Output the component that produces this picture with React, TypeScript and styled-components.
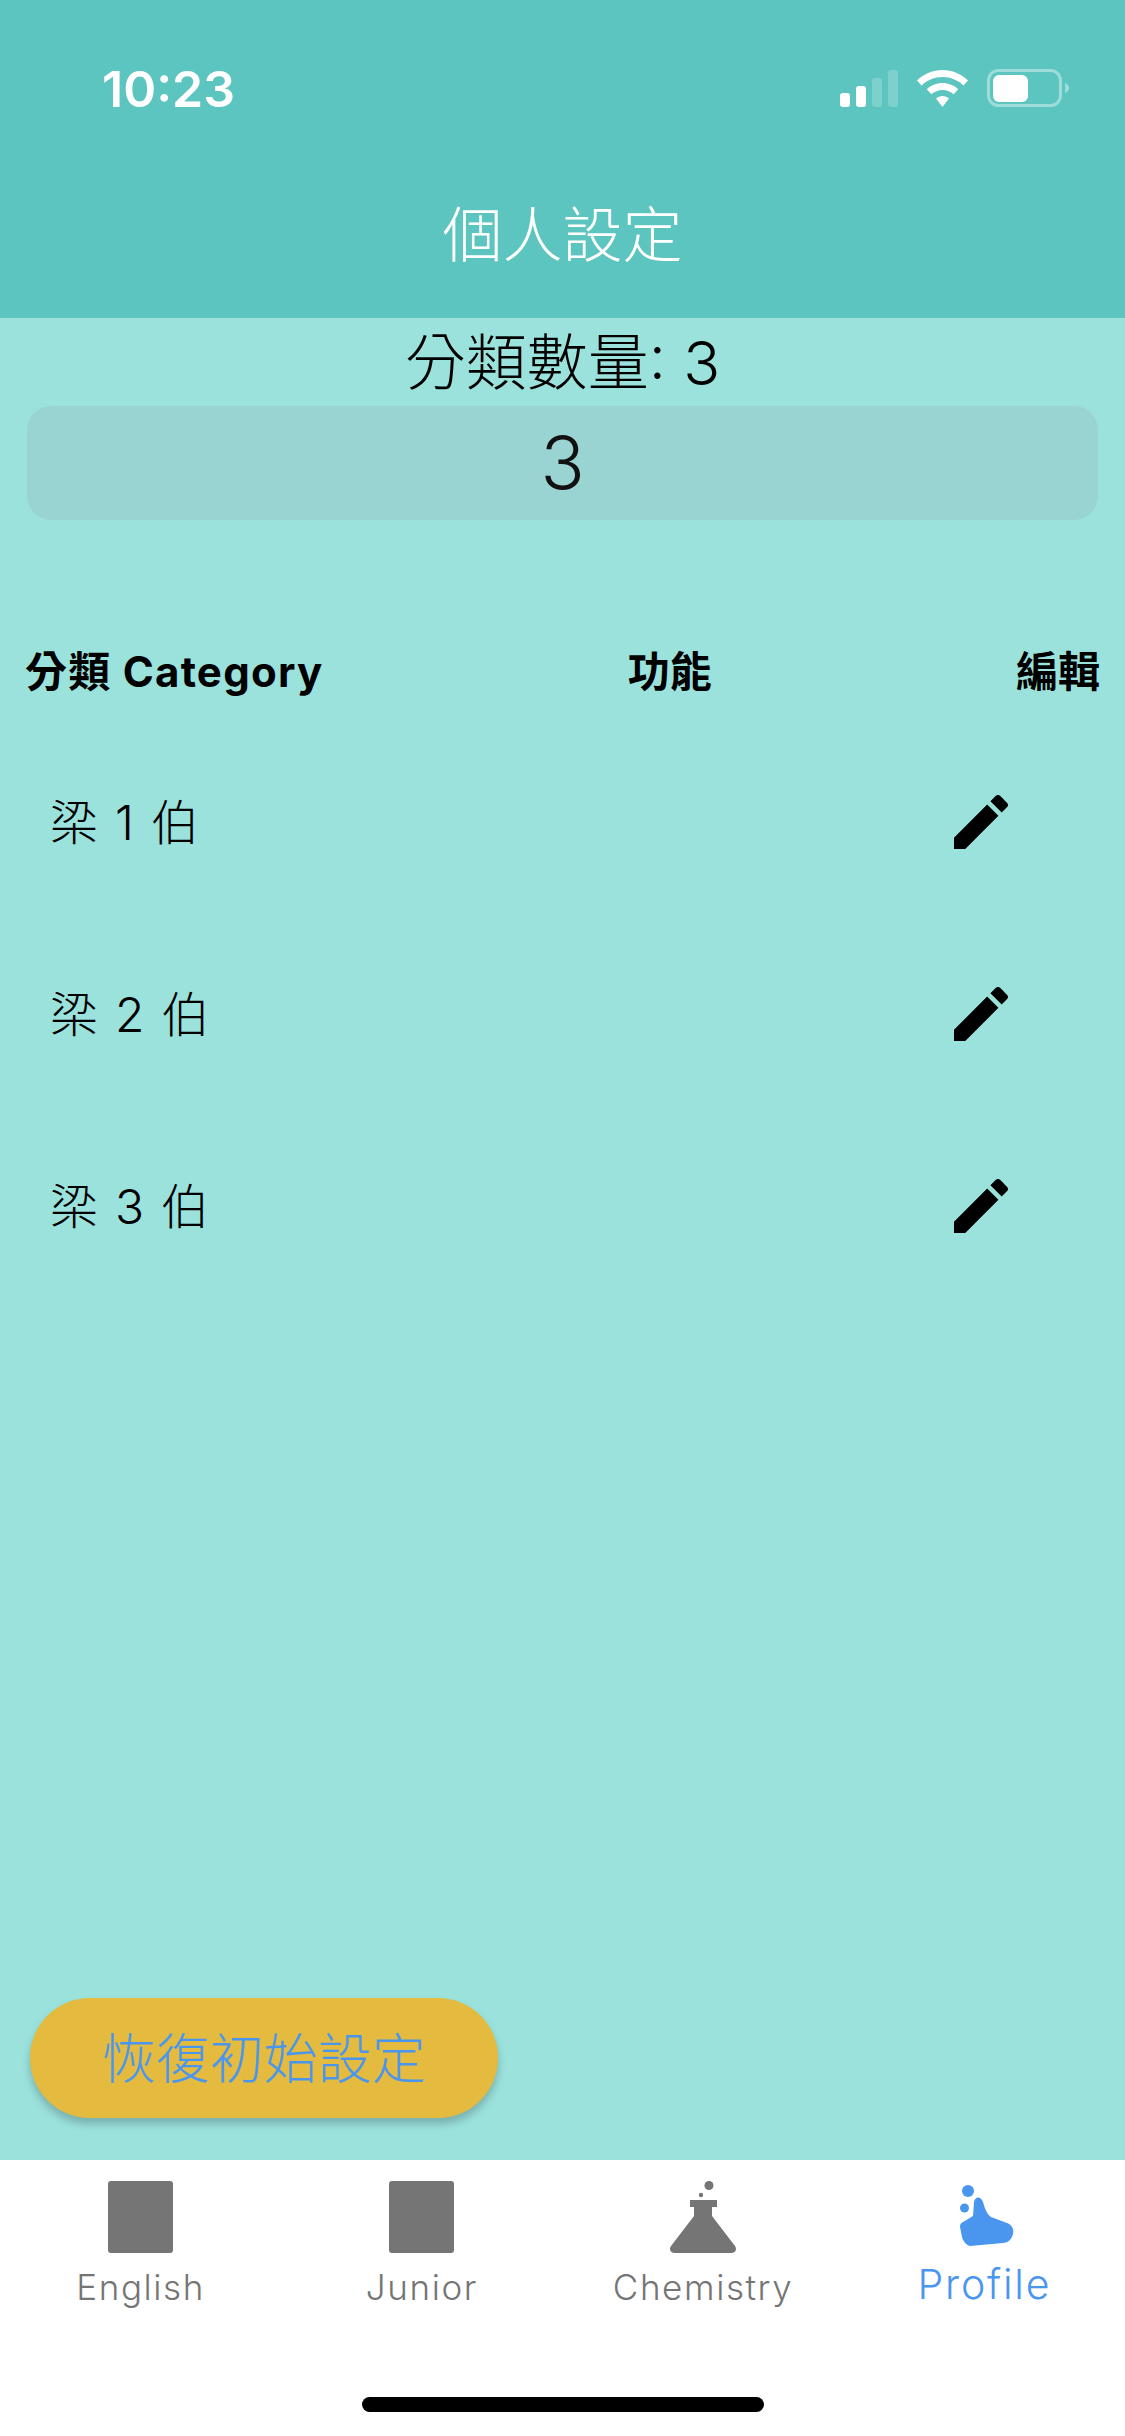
import React from "react";
import styled, { createGlobalStyle } from "styled-components";

const Global = createGlobalStyle`
  html, body { margin: 0; padding: 0; background: #ffffff; }
  body { font-family: Inter, "Noto Sans CJK TC", sans-serif; }
  * { box-sizing: border-box; }
`;

const Page = styled.div`
  width: 1125px;
  height: 2436px;
  display: flex;
  flex-direction: column;
  overflow: hidden;
`;

const Header = styled.header`
  height: 318px;
  flex: none;
  background: #5dc5bf;
  display: flex;
  flex-direction: column;
  color: #ffffff;
`;

const StatusBar = styled.div`
  height: 38px;
  margin-top: 70px;
  padding: 0 56px 0 102px;
  display: flex;
  align-items: center;
  justify-content: space-between;
`;

const Time = styled.span`
  font-size: 50px;
  font-weight: 600;
  line-height: 38px;
`;

const StatusIcons = styled.div`
  display: flex;
  align-items: center;
  gap: 19px;
  margin-bottom: 2px;
`;

const Title = styled.h1`
  margin: 89px 0 0;
  text-align: center;
  font-size: 60px;
  font-weight: 300;
  line-height: 76px;
`;

const Main = styled.main`
  flex: 1;
  background: #9be2dd;
  display: flex;
  flex-direction: column;
  color: #000000;
`;

const CountLabel = styled.div`
  height: 88px;
  text-align: center;
  font-size: 61px;
  font-weight: 300;
  line-height: 90px;
`;

const CountInput = styled.div`
  height: 114px;
  margin: 0 27px;
  border-radius: 24px;
  background: #99d4d2;
  color: #111111;
  text-align: center;
  font-size: 73px;
  font-weight: 300;
  line-height: 114px;
`;

const ColumnHeads = styled.div`
  margin-top: 122px;
  padding: 0 25px;
  display: flex;
  justify-content: space-between;
  font-size: 42px;
  font-weight: 700;
  line-height: 60px;
`;

const CategoryHead = styled.span`
  letter-spacing: 1.25px;
`;

const Rows = styled.div`
  margin-top: 24px;
  display: flex;
  flex-direction: column;
`;

const Row = styled.div`
  height: 192px;
  padding: 0 108px 0 50px;
  display: flex;
  align-items: center;
  justify-content: space-between;
`;

const RowLabel = styled.span`
  padding-bottom: 6px;
  font-size: 48px;
  font-weight: 300;
  word-spacing: 3.5px;
`;

const ResetButton = styled.button`
  width: 468px;
  height: 120px;
  margin: auto 0 42px 30px;
  padding: 0 0 6px;
  border: none;
  border-radius: 60px;
  background: #e4bb3e;
  color: #4a96ef;
  font-family: inherit;
  font-size: 54px;
  font-weight: 300;
  box-shadow: 0 6px 9px rgba(0, 0, 0, 0.22);
`;

const TabBar = styled.nav`
  height: 276px;
  flex: none;
  background: #ffffff;
  display: flex;
  flex-direction: column;
`;

const TabRow = styled.div`
  display: grid;
  grid-template-columns: repeat(4, 1fr);
  align-items: start;
`;

const Tab = styled.div<{ $active?: boolean }>`
  height: 150px;
  margin-top: 21px;
  display: flex;
  flex-direction: column;
  align-items: center;
  color: ${(p) => (p.$active ? "#4a96ef" : "#757575")};
`;

const IconSlot = styled.div`
  height: 72px;
  display: flex;
  align-items: flex-start;
  justify-content: center;
`;

const SquareIcon = styled.div`
  width: 65px;
  height: 72px;
  border-radius: 3px;
  background: #757575;
`;

const TabLabel = styled.span<{ $active?: boolean }>`
  margin-top: ${(p) => (p.$active ? "7px" : "10px")};
  font-size: ${(p) => (p.$active ? "41px" : "35px")};
  font-weight: 300;
  letter-spacing: ${(p) => (p.$active ? "1.8px" : "1.6px")};
  line-height: 48px;
`;

const HomeIndicator = styled.div`
  width: 402px;
  height: 15px;
  margin: 66px auto 0;
  border-radius: 8px;
  background: #000000;
`;

const HandSvg = styled.svg`
  margin-left: 6px;
`;

const StatusGlyphs = () => (
  <>
    <svg width="58" height="37" viewBox="0 0 58 37" fill="#fff">
      <rect x="0" y="23" width="10" height="14" rx="3" />
      <rect x="16" y="16" width="10" height="21" rx="3" />
      <rect x="32" y="8" width="10" height="29" rx="3" opacity="0.2" />
      <rect x="48" y="0" width="10" height="37" rx="3" opacity="0.2" />
    </svg>
    <svg width="51" height="37" viewBox="0 0 51 37" fill="#fff">
      <path d="M25.5 0C35 0 44 3.800 51 10.500L46.500 15.500C40.800 10 33.500 7 25.500 7S10.200 10 4.500 15.500L0 10.500C7 3.800 16 0 25.500 0Z" />
      <path d="M25.500 13C31.500 13 37 15.300 41.200 19.200L36.700 24.200C33.700 21.500 29.800 19.900 25.500 19.900S17.300 21.500 14.300 24.200L9.800 19.200C14 15.300 19.500 13 25.500 13Z" />
      <path d="M25.500 26C28 26 30.300 26.900 32 28.500L25.500 37L19 28.500C20.700 26.900 23 26 25.500 26Z" />
    </svg>
    <svg width="82" height="38" viewBox="0 0 82 38">
      <rect x="1.500" y="1.500" width="72" height="35" rx="10" fill="none" stroke="#fff" strokeOpacity="0.4" strokeWidth="3" />
      <rect x="6" y="6" width="35" height="27" rx="6" fill="#fff" />
      <path d="M78 14C81 15 82 17 82 19S81 23 78 24Z" fill="#fff" fillOpacity="0.4" />
    </svg>
  </>
);

const PencilIcon = () => (
  <svg width="72" height="72" viewBox="0 0 24 24" fill="#000">
    <path d="M3 17.250V21h3.750L17.810 9.940l-3.750-3.750L3 17.250zM20.710 7.040c.39-.39.39-1.020 0-1.410l-2.340-2.340c-.39-.39-1.020-.39-1.410 0l-1.830 1.830 3.750 3.750 1.830-1.830z" />
  </svg>
);

const FlaskIcon = () => (
  <svg width="66" height="72" viewBox="0 0 66 72" fill="#757575">
    <circle cx="39" cy="4.500" r="4.500" />
    <circle cx="31" cy="14" r="2.200" />
    <path d="M20 19H47V26H42V35L65 65C67.500 69 65 72 61 72H5C1 72 -1.500 69 1 65L24 35V26H20Z" />
  </svg>
);

const HandIcon = () => (
  <HandSvg width="54" height="66" viewBox="0 0 54 66" fill="#4a96ef">
    <circle cx="8" cy="10" r="6" />
    <circle cx="4.500" cy="27" r="4.500" />
    <path d="M14 21C15 15 21 15 23 21C25 28 27 33 31 36L47 42C52 44 54 48 53 53C52 58 48 62 43 62L10 65C6 64 3 60 2 56L0 46C0 43 1 42 3 41L13 35Z" />
  </HandSvg>
);

const categories = ["梁 1 伯", "梁 2 伯", "梁 3 伯"];

export default function App() {
  return (
    <Page>
      <Global />
      <Header>
        <StatusBar>
          <Time>10:23</Time>
          <StatusIcons>
            <StatusGlyphs />
          </StatusIcons>
        </StatusBar>
        <Title>個人設定</Title>
      </Header>
      <Main>
        <CountLabel>分類數量: 3</CountLabel>
        <CountInput>3</CountInput>
        <ColumnHeads>
          <CategoryHead>分類 Category</CategoryHead>
          <span>功能</span>
          <span>編輯</span>
        </ColumnHeads>
        <Rows>
          {categories.map((c) => (
            <Row key={c}>
              <RowLabel>{c}</RowLabel>
              <PencilIcon />
            </Row>
          ))}
        </Rows>
        <ResetButton>恢復初始設定</ResetButton>
      </Main>
      <TabBar>
        <TabRow>
          <Tab>
            <IconSlot><SquareIcon /></IconSlot>
            <TabLabel>English</TabLabel>
          </Tab>
          <Tab>
            <IconSlot><SquareIcon /></IconSlot>
            <TabLabel>Junior</TabLabel>
          </Tab>
          <Tab>
            <IconSlot><FlaskIcon /></IconSlot>
            <TabLabel>Chemistry</TabLabel>
          </Tab>
          <Tab $active>
            <IconSlot><HandIcon /></IconSlot>
            <TabLabel $active>Profile</TabLabel>
          </Tab>
        </TabRow>
        <HomeIndicator />
      </TabBar>
    </Page>
  );
}
